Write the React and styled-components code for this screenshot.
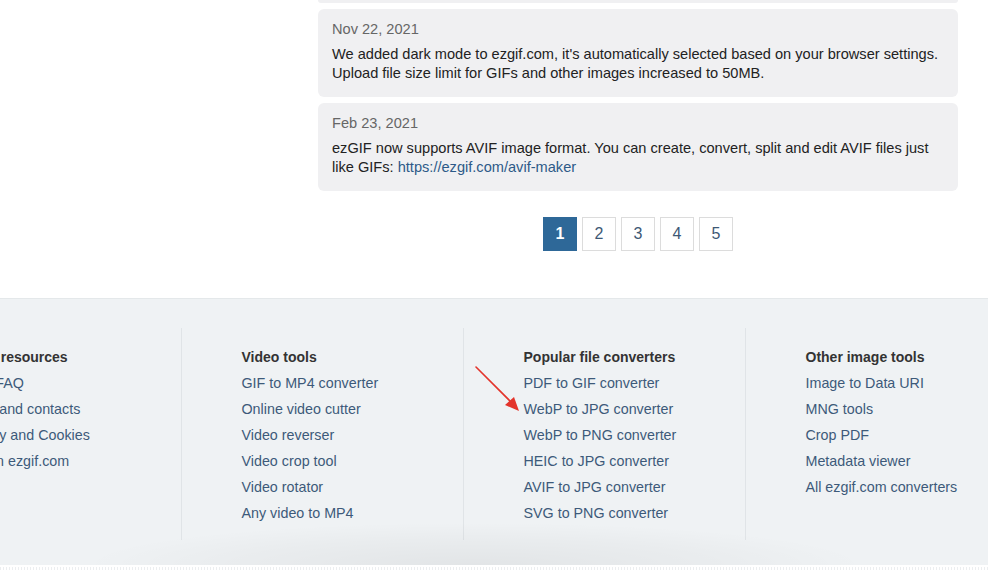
import React from "react";
import styled, { createGlobalStyle } from "styled-components";

const GlobalStyle = createGlobalStyle`
  html, body {
    margin: 0;
    padding: 0;
    background: #fff;
    overflow: hidden;
  }
  body {
    font-family: "Liberation Sans", Arial, Helvetica, sans-serif;
    font-size: 14px;
    color: #222;
  }
`;

const Page = styled.div`
  width: 988px;
  height: 572px;
  overflow: hidden;
  position: relative;
`;

const Main = styled.div`
  display: grid;
  grid-template-columns: 318px 640px;
`;

const News = styled.div`
  grid-column: 2;
  display: flex;
  flex-direction: column;
  gap: 6px;
`;

const CardTail = styled.div`
  height: 3px;
  background: #f0f0f2;
  border-radius: 0 0 6px 6px;
`;

const Card = styled.div`
  background: #f0f0f2;
  border-radius: 6px;
  padding: 10px 14px 14px;
  font-size: 14.6px;
`;

const Date = styled.div`
  color: #666;
  line-height: 20px;
  margin-bottom: 6px;
`;

const Body = styled.div`
  color: #222;
  line-height: 19px;

  a {
    color: #2d5a88;
    text-decoration: none;
  }
`;

const Pager = styled.div`
  grid-column: 2;
  display: flex;
  justify-content: center;
  gap: 5px;
  margin-top: 26px;
`;

const PageBox = styled.div`
  width: 34px;
  height: 34px;
  box-sizing: border-box;
  display: flex;
  align-items: center;
  justify-content: center;
  font-size: 16px;
  border: 1px solid ${(p) => (p.$active ? "#2e6898" : "#dcdcdc")};
  background: ${(p) => (p.$active ? "#2e6898" : "#fff")};
  color: ${(p) => (p.$active ? "#fff" : "#3d5875")};
  font-weight: ${(p) => (p.$active ? 700 : 400)};
`;

const Footer = styled.footer`
  position: relative;
  margin-top: 47px;
  border-top: 1px solid #e4e8ea;
  background: #eff2f4;
  padding: 29px 0 25px;

  &::after {
    content: "";
    position: absolute;
    left: 90px;
    width: 770px;
    bottom: 0;
    height: 42px;
    background: radial-gradient(
      ellipse at 50% 100%,
      rgba(0, 0, 0, 0.055) 0%,
      rgba(0, 0, 0, 0.025) 45%,
      rgba(0, 0, 0, 0) 72%
    );
    pointer-events: none;
  }
`;

const Columns = styled.div`
  display: flex;
  margin-left: -101px;
`;

const Column = styled.div`
  flex: 0 0 282px;
  box-sizing: border-box;
  padding: 16px 0 14px 59.5px;
  border-left: 1px solid ${(p) => (p.$first ? "transparent" : "#e0e4e7")};
`;

const Heading = styled.div`
  font-weight: 700;
  color: #333;
  line-height: 26px;
  white-space: nowrap;
`;

const LinkItem = styled.a`
  display: block;
  color: #3d5a7a;
  font-size: 14.3px;
  line-height: 26px;
  text-decoration: none;
  white-space: nowrap;
`;

const BottomBand = styled.div`
  height: 8px;
  background-color: #fff;
  background-image: repeating-linear-gradient(
    to right,
    #eceef0 0 1px,
    transparent 1px 3px
  );
  background-size: 100% 3px;
  background-repeat: no-repeat;
  background-position: 0 2px;
`;

const Arrow = styled.svg`
  position: absolute;
  left: 470px;
  top: 362px;
  width: 56px;
  height: 54px;
  pointer-events: none;
`;

// first column sits partly off the left edge of the viewport
const footerColumns = [
  {
    title: "Other resources",
    links: ["Ezgif FAQ", "News and contacts", "Privacy and Cookies", "Ads on ezgif.com"],
  },
  {
    title: "Video tools",
    links: [
      "GIF to MP4 converter",
      "Online video cutter",
      "Video reverser",
      "Video crop tool",
      "Video rotator",
      "Any video to MP4",
    ],
  },
  {
    title: "Popular file converters",
    links: [
      "PDF to GIF converter",
      "WebP to JPG converter",
      "WebP to PNG converter",
      "HEIC to JPG converter",
      "AVIF to JPG converter",
      "SVG to PNG converter",
    ],
  },
  {
    title: "Other image tools",
    links: ["Image to Data URI", "MNG tools", "Crop PDF", "Metadata viewer", "All ezgif.com converters"],
  },
];

const App = () => {
  return (
    <Page>
      <GlobalStyle />
      <Main>
        <News>
          <CardTail />
          <Card>
            <Date>Nov 22, 2021</Date>
            <Body>
              We added dark mode to ezgif.com, it's automatically selected based on your browser settings.
              <br />
              Upload file size limit for GIFs and other images increased to 50MB.
            </Body>
          </Card>
          <Card>
            <Date>Feb 23, 2021</Date>
            <Body>
              ezGIF now supports AVIF image format. You can create, convert, split and edit AVIF files just
              <br />
              like GIFs: <a href="#avif">https://ezgif.com/avif-maker</a>
            </Body>
          </Card>
        </News>
        <Pager>
          {[1, 2, 3, 4, 5].map((n) => (
            <PageBox key={n} $active={n === 1}>
              {n}
            </PageBox>
          ))}
        </Pager>
      </Main>

      <Footer>
        <Columns>
          {footerColumns.map((col, i) => (
            <Column key={col.title} $first={i === 0}>
              <Heading>{col.title}</Heading>
              {col.links.map((l) => (
                <LinkItem key={l} href="#">
                  {l}
                </LinkItem>
              ))}
            </Column>
          ))}
        </Columns>
      </Footer>
      <BottomBand />

      <Arrow viewBox="0 0 56 54">
        <line x1="6" y1="5" x2="41" y2="40" stroke="#e3342b" strokeWidth="1.6" strokeLinecap="round" />
        <polygon points="49,49 35,43 44,35" fill="#e3342b" />
      </Arrow>
    </Page>
  );
};

export default App;
